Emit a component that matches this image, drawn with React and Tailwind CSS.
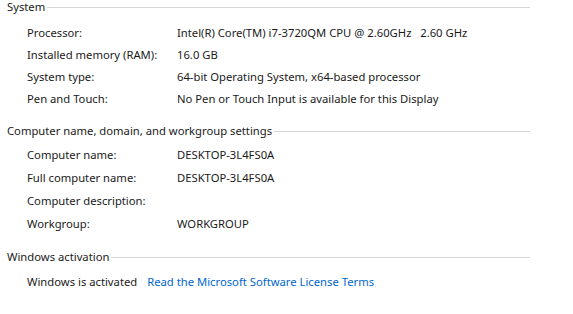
import React from 'react';

const Section = ({ title, children, className = '' }) => (
    <div className={className}>
        <div className="flex items-center h-[14px]">
            <span className="pl-[7px] pr-[2px] whitespace-nowrap">{title}</span>
            <div className="h-px bg-[#d6d6d6] flex-1 mr-[43px]"></div>
        </div>
        <div className="pl-[27px]">{children}</div>
    </div>
);

const Row = ({ label, value, h = 'h-[22px]' }) => (
    <div className={`flex items-center ${h}`}>
        <span className="w-[150px] shrink-0">{label}</span>
        <span className="whitespace-pre">{value}</span>
    </div>
);

export default function App() {
    return (
        <div className="w-[573px] h-[314px] bg-white text-[#1a1a1a] text-[11.25px] overflow-hidden font-['Noto_Sans',sans-serif]">
            <Section title="System">
                <div className="pt-[8px]">
                    <Row label="Processor:" value="Intel(R) Core(TM) i7-3720QM CPU @ 2.60GHz   2.60 GHz" />
                    <Row label="Installed memory (RAM):" value="16.0 GB" />
                    <Row label="System type:" value="64-bit Operating System, x64-based processor" />
                    <Row label="Pen and Touch:" value="No Pen or Touch Input is available for this Display" />
                </div>
            </Section>
            <Section title="Computer name, domain, and workgroup settings" className="pt-[14px]">
                <div className="pt-[6px]">
                    <Row h="h-[23px]" label="Computer name:" value="DESKTOP-3L4FS0A" />
                    <Row h="h-[23px]" label="Full computer name:" value="DESKTOP-3L4FS0A" />
                    <Row h="h-[23px]" label="Computer description:" value="" />
                    <Row h="h-[23px]" label="Workgroup:" value="WORKGROUP" />
                </div>
            </Section>
            <Section title="Windows activation" className="pt-[14px]">
                <div className="pt-[7px] flex items-center h-[29px]">
                    <span>Windows is activated</span>
                    <span className="ml-[10px] text-[#0066cc]">Read the Microsoft Software License Terms</span>
                </div>
            </Section>
        </div>
    );
}
